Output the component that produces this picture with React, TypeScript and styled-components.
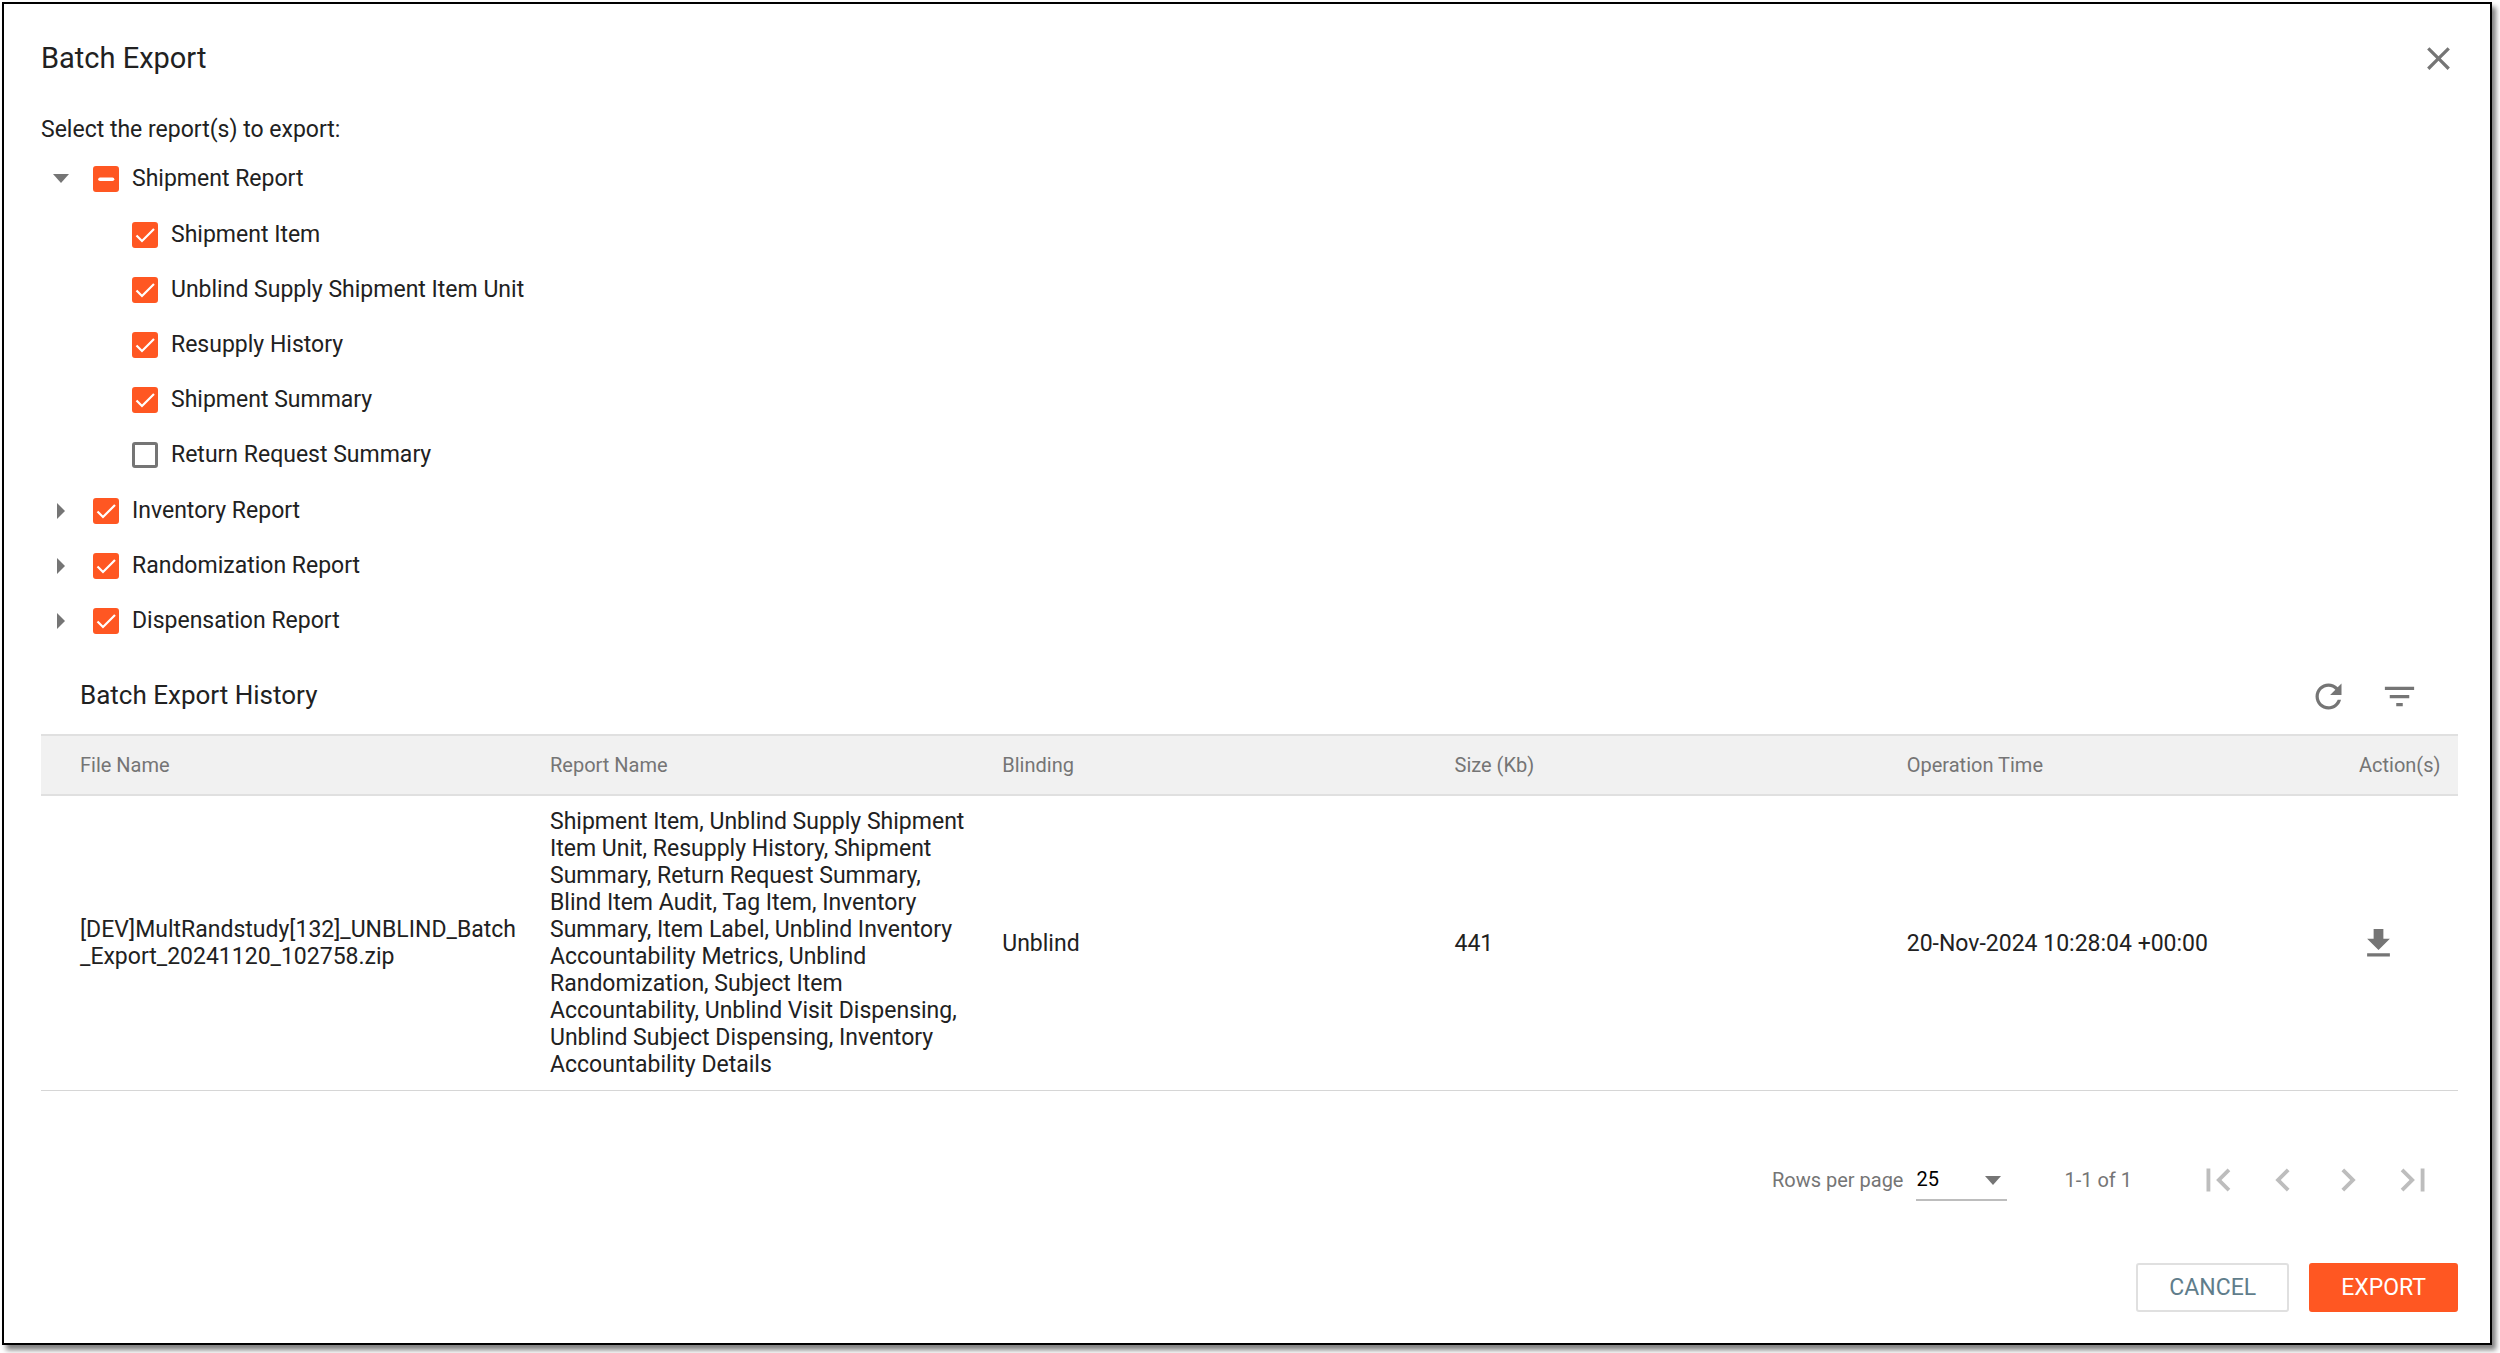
import React, { useEffect, useRef, useState } from "react";
import styled, { createGlobalStyle } from "styled-components";

const color = {
  text: "#212121",
  muted: "#757575",
  disabled: "#bdbdbd",
  line: "#e0e0e0",
  headBg: "#f1f1f1",
  accent: "#ff5722",
  slate: "#607d8b",
};

const GlobalStyle = createGlobalStyle`
  *, *::before, *::after { box-sizing: border-box; }
  body {
    margin: 0;
    background: #fff;
    color: ${color.text};
    font-family: Roboto, "Liberation Sans", sans-serif;
    font-size: 23px;
    line-height: 27px;
  }
  button, select, input { font: inherit; color: inherit; }
`;

const Dialog = styled.main`
  margin: 2px 8px 8px 2px;
  padding: 35px 32px 31px 37px;
  border: 2px solid #000;
  background: #fff;
  box-shadow: 4px 5px 5px rgba(0, 0, 0, 0.5);
`;

const DialogHeader = styled.header`
  display: flex;
  align-items: center;
  justify-content: space-between;
`;

const Title = styled.h1`
  margin: 0;
  padding-bottom: 2px;
  font-size: 29px;
  line-height: 34px;
  font-weight: 400;
`;

const IconButton = styled.button<{ $disabledLook?: boolean }>`
  display: flex;
  padding: 0;
  border: 0;
  background: none;
  color: ${(p) => (p.$disabledLook ? color.disabled : color.muted)};
  cursor: pointer;
`;

const Prompt = styled.p`
  margin: 38px 0 8px;
`;

const TreeList = styled.ul`
  margin: 0;
  padding: 0;
  list-style: none;
`;

const SubList = styled(TreeList)`
  padding: 1px 0;
`;

const TreeRow = styled.div<{ $nested?: boolean }>`
  display: flex;
  align-items: center;
  height: 55px;
  padding-left: ${(p) => (p.$nested ? 91 : 0)}px;
`;

const Toggle = styled.button`
  display: flex;
  justify-content: center;
  width: 39px;
  margin-right: 13px;
  padding: 0;
  border: 0;
  background: none;
  color: ${color.muted};
`;

const CheckLabel = styled.label`
  display: flex;
  align-items: center;
  gap: 13px;
`;

const CheckBox = styled.span`
  display: grid;
  width: 26px;
  height: 26px;
  > * { grid-area: 1 / 1; }
  svg { pointer-events: none; }
`;

const CheckInput = styled.input`
  appearance: none;
  width: 26px;
  height: 26px;
  margin: 0;
  border: 3px solid ${color.muted};
  border-radius: 3px;
  &:checked, &:indeterminate {
    border-color: ${color.accent};
    background: ${color.accent};
  }
`;

const HistoryHeader = styled.div`
  display: flex;
  align-items: center;
  justify-content: space-between;
  height: 76px;
  margin-top: 10px;
  padding: 0 39px;
`;

const HistoryTitle = styled.h2`
  margin: 0;
  padding-bottom: 2px;
  font-size: 26px;
  line-height: 31px;
  font-weight: 400;
`;

const Tools = styled.div`
  display: flex;
  gap: 32px;
`;

const Table = styled.table`
  width: 100%;
  table-layout: fixed;
  border-collapse: separate;
  border-spacing: 0;
  text-align: left;
`;

const Col = styled.col<{ $width?: number }>`
  width: ${(p) => (p.$width ? `${p.$width}px` : "auto")};
`;

const HeadCell = styled.th`
  height: 62px;
  padding: 0 12px 0 20px;
  border: solid ${color.line};
  border-width: 2px 0;
  background: ${color.headBg};
  color: ${color.muted};
  font-size: 20px;
  line-height: 24px;
  font-weight: 400;
  white-space: nowrap;
  &:first-child { padding-left: 39px; }
`;

const Cell = styled.td<{ $breakAll?: boolean }>`
  padding: 12px 12px 12px 20px;
  border-bottom: 1px solid #d6d6d6;
  vertical-align: middle;
  word-break: ${(p) => (p.$breakAll ? "break-all" : "normal")};
  &:first-child { padding-left: 39px; }
`;

const Pagination = styled.div`
  display: flex;
  align-items: center;
  justify-content: flex-end;
  margin-top: 66px;
  padding-right: 22px;
  color: ${color.muted};
  font-size: 20px;
  line-height: 24px;
`;

const SelectBox = styled.span`
  position: relative;
  width: 91px;
  margin: 0 57px 0 13px;
  svg {
    position: absolute;
    top: 17px;
    right: 6px;
    pointer-events: none;
  }
`;

const PageSize = styled.select`
  appearance: none;
  display: block;
  width: 100%;
  height: 42px;
  padding: 0;
  border: 0;
  border-bottom: 2px solid ${color.disabled};
  border-radius: 0;
  background: none;
  color: #000;
`;

const Pager = styled.nav`
  display: flex;
  gap: 19px;
  margin-left: 63px;
`;

const Actions = styled.footer`
  display: flex;
  justify-content: flex-end;
  gap: 20px;
  margin-top: 60px;
`;

const ActionButton = styled.button<{ $primary?: boolean }>`
  height: 49px;
  padding: 0 ${(p) => (p.$primary ? 30 : 31)}px;
  border: 2px solid ${(p) => (p.$primary ? color.accent : color.line)};
  border-radius: 3px;
  background: ${(p) => (p.$primary ? color.accent : "#fff")};
  color: ${(p) => (p.$primary ? "#fff" : color.slate)};
  cursor: pointer;
`;

const Icon = ({ d, size = 39 }: { d: string; size?: number }) => (
  <svg width={size} height={size} viewBox="0 0 24 24" fill="currentColor" aria-hidden="true">
    <path d={d} />
  </svg>
);

const DownArrow = () => (
  <svg width="16" height="9" viewBox="0 0 16 9" fill={color.muted} aria-hidden="true">
    <path d="M0 0h16L8 9z" />
  </svg>
);

const RightArrow = () => (
  <svg width="8" height="16" viewBox="0 0 8 16" fill={color.muted} aria-hidden="true">
    <path d="M0 0v16l8-8z" />
  </svg>
);

type CheckState = "on" | "off" | "mixed";

function Check({ text, state }: { text: string; state: CheckState }) {
  const ref = useRef<HTMLInputElement>(null);
  const [current, setCurrent] = useState<CheckState>(state);
  useEffect(() => {
    if (ref.current) ref.current.indeterminate = current === "mixed";
  }, [current]);
  return (
    <CheckLabel>
      <CheckBox>
        <CheckInput
          ref={ref}
          type="checkbox"
          checked={current === "on"}
          onChange={(e) => setCurrent(e.target.checked ? "on" : "off")}
        />
        {current !== "off" && (
          <svg width="26" height="26" viewBox="0 0 26 26" fill="none" stroke="#fff" aria-hidden="true">
            {current === "on" ? (
              <path d="M4.5 13.5l5.5 5.5L22 7" strokeWidth="2.2" />
            ) : (
              <path d="M7 13.3h12.5" strokeWidth="3.6" strokeLinecap="round" />
            )}
          </svg>
        )}
      </CheckBox>
      <span>{text}</span>
    </CheckLabel>
  );
}

type Report = { name: string; state: CheckState; children?: Report[] };

const reports: Report[] = [
  {
    name: "Shipment Report",
    state: "mixed",
    children: [
      { name: "Shipment Item", state: "on" },
      { name: "Unblind Supply Shipment Item Unit", state: "on" },
      { name: "Resupply History", state: "on" },
      { name: "Shipment Summary", state: "on" },
      { name: "Return Request Summary", state: "off" },
    ],
  },
  { name: "Inventory Report", state: "on" },
  { name: "Randomization Report", state: "on" },
  { name: "Dispensation Report", state: "on" },
];

const columns = ["File Name", "Report Name", "Blinding", "Size (Kb)", "Operation Time", "Action(s)"];

const history = [
  {
    file: "[DEV]MultRandstudy[132]_UNBLIND_Batch_Export_20241120_102758.zip",
    reports:
      "Shipment Item, Unblind Supply Shipment Item Unit, Resupply History, Shipment Summary, Return Request Summary, Blind Item Audit, Tag Item, Inventory Summary, Item Label, Unblind Inventory Accountability Metrics, Unblind Randomization, Subject Item Accountability, Unblind Visit Dispensing, Unblind Subject Dispensing, Inventory Accountability Details",
    blinding: "Unblind",
    size: "441",
    time: "20-Nov-2024 10:28:04 +00:00",
  },
];

const icons = {
  close: "M19 6.41L17.59 5 12 10.59 6.41 5 5 6.41 10.59 12 5 17.59 6.41 19 12 13.41 17.59 19 19 17.59 13.41 12z",
  refresh:
    "M17.65 6.35C16.2 4.9 14.21 4 12 4c-4.42 0-7.99 3.58-7.99 8s3.57 8 7.99 8c3.73 0 6.84-2.55 7.73-6h-2.08c-.82 2.33-3.04 4-5.65 4-3.31 0-6-2.69-6-6s2.69-6 6-6c1.66 0 3.14.69 4.22 1.78L13 11h7V4l-2.35 2.35z",
  filter: "M10 18h4v-2h-4v2zM3 6v2h18V6H3zm3 7h12v-2H6v2z",
  download: "M19 9h-4V3H9v6H5l7 7 7-7zM5 18v2h14v-2H5z",
};

const pagerIcons = [
  { label: "First page", d: "M18.41 16.59L13.82 12l4.59-4.59L17 6l-6 6 6 6zM6 6h2v12H6z" },
  { label: "Previous page", d: "M15.41 7.41L14 6l-6 6 6 6 1.41-1.41L10.83 12z" },
  { label: "Next page", d: "M10 6L8.59 7.41 13.17 12l-4.58 4.59L10 18l6-6z" },
  { label: "Last page", d: "M5.59 7.41L10.18 12l-4.59 4.59L7 18l6-6-6-6zM16 6h2v12h-2z" },
];

function TreeItem({ report }: { report: Report }) {
  const [open, setOpen] = useState(Boolean(report.children));
  return (
    <li>
      <TreeRow>
        <Toggle
          type="button"
          aria-expanded={open}
          aria-label={`Toggle ${report.name}`}
          onClick={() => setOpen(!open)}
        >
          {open ? <DownArrow /> : <RightArrow />}
        </Toggle>
        <Check text={report.name} state={report.state} />
      </TreeRow>
      {open && report.children && (
        <SubList>
          {report.children.map((child) => (
            <li key={child.name}>
              <TreeRow $nested>
                <Check text={child.name} state={child.state} />
              </TreeRow>
            </li>
          ))}
        </SubList>
      )}
    </li>
  );
}

export default function App() {
  return (
    <>
      <GlobalStyle />
      <Dialog>
        <DialogHeader>
          <Title>Batch Export</Title>
          <IconButton type="button" aria-label="Close">
            <Icon d={icons.close} />
          </IconButton>
        </DialogHeader>

        <Prompt>Select the report(s) to export:</Prompt>
        <TreeList>
          {reports.map((report) => (
            <TreeItem key={report.name} report={report} />
          ))}
        </TreeList>

        <HistoryHeader>
          <HistoryTitle>Batch Export History</HistoryTitle>
          <Tools>
            <IconButton type="button" aria-label="Refresh">
              <Icon d={icons.refresh} />
            </IconButton>
            <IconButton type="button" aria-label="Filter">
              <Icon d={icons.filter} />
            </IconButton>
          </Tools>
        </HistoryHeader>

        <Table>
          <colgroup>
            <Col $width={489} />
            <Col />
            <Col />
            <Col />
            <Col />
            <Col $width={119} />
          </colgroup>
          <thead>
            <tr>
              {columns.map((name) => (
                <HeadCell key={name} scope="col">
                  {name}
                </HeadCell>
              ))}
            </tr>
          </thead>
          <tbody>
            {history.map((row) => (
              <tr key={row.file}>
                <Cell $breakAll>{row.file}</Cell>
                <Cell>{row.reports}</Cell>
                <Cell>{row.blinding}</Cell>
                <Cell>{row.size}</Cell>
                <Cell>{row.time}</Cell>
                <Cell>
                  <IconButton type="button" aria-label="Download">
                    <Icon d={icons.download} />
                  </IconButton>
                </Cell>
              </tr>
            ))}
          </tbody>
        </Table>

        <Pagination>
          <label htmlFor="page-size">Rows per page</label>
          <SelectBox>
            <PageSize id="page-size" defaultValue="25">
              <option>10</option>
              <option>25</option>
              <option>50</option>
            </PageSize>
            <DownArrow />
          </SelectBox>
          <span>1-1 of 1</span>
          <Pager aria-label="Pages">
            {pagerIcons.map((icon) => (
              <IconButton key={icon.label} type="button" aria-label={icon.label} $disabledLook>
                <Icon d={icon.d} size={46} />
              </IconButton>
            ))}
          </Pager>
        </Pagination>

        <Actions>
          <ActionButton type="button">CANCEL</ActionButton>
          <ActionButton type="button" $primary>
            EXPORT
          </ActionButton>
        </Actions>
      </Dialog>
    </>
  );
}
